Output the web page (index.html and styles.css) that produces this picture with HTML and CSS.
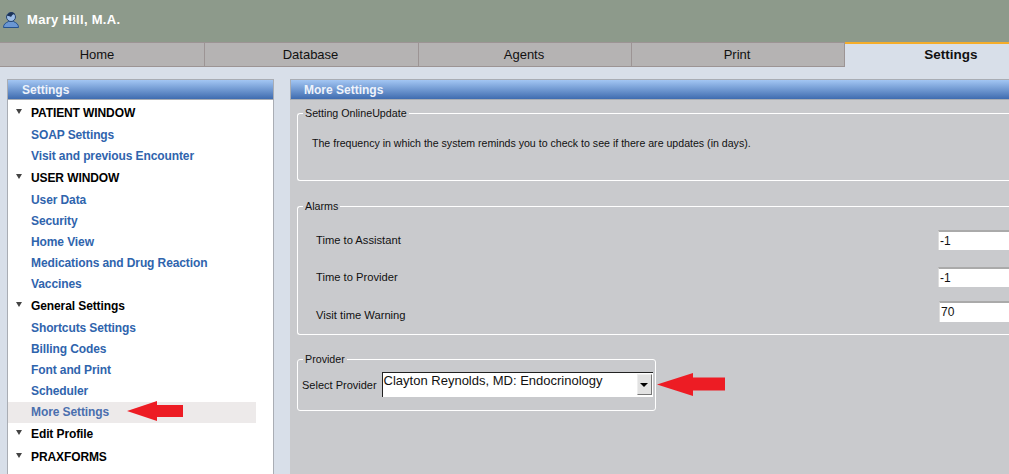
FILE: index.html
```html
<!DOCTYPE html>
<html lang="en">
<head>
    <meta charset="UTF-8">
    <title>Settings</title>
    <link rel="stylesheet" href="styles.css">
</head>
<body>
    <div class="topbar">
        <svg class="user-icon" width="16" height="17" viewBox="0 0 16 17">
            <path d="M.5 16.500c0-3.500 2-4.500 5-6h5c3 1.500 5 2.500 5 6z" fill="#6b97d2" stroke="#24528f"/>
            <circle cx="8" cy="6" r="4.500" fill="#9dbde6" stroke="#27456f"/>
            <path d="M4 5c1-4 6-5 8-2-2 0-3 1-4 3-1-1-2-1-4-1z" fill="#1c3358"/>
        </svg>
        <span class="user-name">Mary Hill, M.A.</span>
    </div>

    <div class="tabs">
        <div class="tab tab-home">Home</div>
        <div class="tab tab-db">Database</div>
        <div class="tab tab-agents">Agents</div>
        <div class="tab tab-print">Print</div>
        <div class="tab tab-active">Settings</div>
    </div>

    <div class="main">
        <div class="sidebar">
            <div class="panel-head">Settings</div>
            <div class="side-list">
                <div class="group"><span class="caret"></span>PATIENT WINDOW</div>
                <div class="item">SOAP Settings</div>
                <div class="item">Visit and previous Encounter</div>
                <div class="group"><span class="caret"></span>USER WINDOW</div>
                <div class="item">User Data</div>
                <div class="item">Security</div>
                <div class="item">Home View</div>
                <div class="item">Medications and Drug Reaction</div>
                <div class="item">Vaccines</div>
                <div class="group"><span class="caret"></span>General Settings</div>
                <div class="item">Shortcuts Settings</div>
                <div class="item">Billing Codes</div>
                <div class="item">Font and Print</div>
                <div class="item">Scheduler</div>
                <div class="item item-current">More Settings
                    <svg class="arrow-left" width="56" height="20" viewBox="0 0 56 20"><path d="M0 10 30 0v4h26v12H30v4z" fill="#ed1c24"/></svg>
                </div>
                <div class="group"><span class="caret"></span>Edit Profile</div>
                <div class="group"><span class="caret"></span>PRAXFORMS</div>
            </div>
        </div>

        <div class="content">
            <div class="panel-head">More Settings</div>
            <div class="content-body">
                <fieldset class="box box-update">
                    <legend>Setting OnlineUpdate</legend>
                    <p class="note">The frequency in which the system reminds you to check to see if there are updates (in days).</p>
                </fieldset>

                <fieldset class="box box-alarms">
                    <legend>Alarms</legend>
                    <div class="alarm-row">
                        <span>Time to Assistant</span>
                        <input class="num" type="text" value="-1">
                    </div>
                    <div class="alarm-row">
                        <span>Time to Provider</span>
                        <input class="num" type="text" value="-1">
                    </div>
                    <div class="alarm-row">
                        <span>Visit time Warning</span>
                        <input class="num num-plain" type="text" value="70">
                    </div>
                </fieldset>

                <div class="provider-wrap">
                    <fieldset class="box box-provider">
                        <legend>Provider</legend>
                        <div class="provider-row">
                            <span>Select Provider</span>
                            <div class="combo">
                                <span class="combo-text">Clayton Reynolds, MD: Endocrinology</span>
                                <span class="combo-btn"><span class="combo-caret"></span></span>
                            </div>
                        </div>
                    </fieldset>
                    <svg class="arrow-right" width="68" height="23" viewBox="0 0 68 23"><path d="M0 11.500 36 0v4.500h32v13H36V23z" fill="#ed1c24"/></svg>
                </div>
            </div>
        </div>
    </div>
</body>
</html>
```

FILE: styles.css
```css
html, body {
    margin: 0;
    padding: 0;
    height: 474px;
    overflow: hidden;
}
body {
    font-family: "Liberation Sans", Arial, sans-serif;
    background-color: #d8dfe9;
    color: #000;
}

/* top bar */
.topbar {
    height: 42px;
    background-color: #8d9a8b;
    display: flex;
    align-items: center;
    padding-left: 3px;
}
.user-icon {
    margin-right: 8px;
    margin-top: -4px;
}
.user-name {
    color: #fff;
    font-size: 13px;
    font-weight: bold;
    letter-spacing: 0.3px;
    margin-top: -3px;
}

/* tabs */
.tabs {
    display: flex;
    height: 23px;
    background-color: #b5b3b3;
    border-top: 1px solid #9c9494;
    border-bottom: 1px solid #9c9494;
}
.tab {
    font-size: 13px;
    line-height: 24px;
    text-align: center;
    color: #111;
    border-right: 1px solid #9c9494;
    box-sizing: border-box;
}
.tab-home { width: 205px; padding-right: 10px; }
.tab-db { width: 214px; padding-right: 2px; }
.tab-agents { width: 213px; padding-right: 2px; }
.tab-print { width: 213px; padding-right: 2px; }
.tab-active {
    flex: 1;
    margin-top: -1px;
    margin-bottom: -1px;
    padding-left: 48px;
    border-top: 2px solid #f5ad2a;
    border-right: none;
    background-color: #d8dfe9;
    font-size: 13.500px;
    font-weight: bold;
    line-height: 22px;
}

/* main area */
.main {
    display: flex;
    padding: 12px 0 0 7px;
    height: 395px;
}
.sidebar {
    width: 265px;
    margin-right: 16px;
    border: 1px solid #a9adb4;
    border-bottom: none;
    background-color: #fff;
    flex-shrink: 0;
}
.panel-head {
    height: 19px;
    line-height: 20px;
    border-bottom: 1px solid #a9adb4;
    padding-left: 14px;
    color: #eef3fb;
    font-size: 12px;
    font-weight: bold;
    background: linear-gradient(#a3c6f3, #3f6cb0);
}

/* sidebar list */
.side-list {
    padding-top: 2px;
}
.group {
    position: relative;
    height: 22px;
    margin-bottom: 1px;
    line-height: 22px;
    padding-left: 23px;
    font-size: 12px;
    font-weight: bold;
    letter-spacing: -0.1px;
    color: #000;
}
.caret {
    position: absolute;
    left: 8px;
    top: 7px;
    width: 0;
    height: 0;
    border-left: 3.500px solid transparent;
    border-right: 3.500px solid transparent;
    border-top: 5px solid #444;
}
.item {
    position: relative;
    height: 21px;
    line-height: 21px;
    padding-left: 23px;
    font-size: 12px;
    font-weight: bold;
    letter-spacing: -0.1px;
    color: #2f64ad;
}
.item-current {
    background-color: #edeaea;
    width: 225px;
    color: #4a6fae;
}
.arrow-left {
    position: absolute;
    left: 119px;
    top: -1px;
}

/* content */
.content {
    flex: 1;
    min-width: 0;
    border-top: 1px solid #a9adb4;
    background-color: #c9cacd;
}
.content .panel-head {
    border-left: 1px solid #a9adb4;
    padding-left: 13px;
}
.content-body {
    padding: 6px 0 0 7px;
}
.box {
    margin: 0;
    padding: 0;
    border: 1px solid #fff;
    border-radius: 3px;
    box-sizing: border-box;
    min-width: 0;
    font-size: 11px;
    color: #111;
}
.box legend {
    margin-left: 5px;
    padding: 0 2px;
    font-size: 10.700px;
    line-height: 14px;
    color: #111;
}
.box-update,
.box-alarms {
    border-right: none;
    border-radius: 3px 0 0 3px;
}
.box-update {
    height: 75px;
    margin-bottom: 18px;
}
.note {
    margin: 16px 0 0 14px;
    font-size: 10.600px;
    line-height: 14px;
}
.box-alarms {
    height: 136px;
    margin-bottom: 17px;
}
.alarm-row {
    display: flex;
    align-items: center;
    justify-content: space-between;
    height: 37.500px;
    margin-left: 18px;
    font-size: 11.200px;
}
.alarm-row:first-of-type {
    margin-top: 8px;
}
.num {
    width: 71px;
    height: 20px;
    padding: 0 0 0 1px;
    box-sizing: border-box;
    border: none;
    border-top: 2px solid #aaa;
    border-left: 1px solid #ddd;
    background-color: #fff;
    font-family: "Liberation Sans", Arial, sans-serif;
    font-size: 12px;
    color: #111;
}
.num-plain {
    width: 70px;
    height: 21px;
    margin-bottom: 7px;
}

/* provider */
.provider-wrap {
    display: flex;
    align-items: flex-start;
}
.box-provider {
    width: 359px;
    height: 59px;
    flex-shrink: 0;
}
.provider-row {
    display: flex;
    align-items: center;
    margin: 6px 0 0 4px;
}
.combo {
    display: flex;
    margin-left: 5px;
    width: 271px;
    height: 25px;
    box-sizing: border-box;
    border-top: 1px solid #222;
    border-left: 1px solid #222;
    background-color: #fff;
}
.combo-text {
    flex: 1;
    font-size: 13px;
    line-height: 15px;
    padding-left: 1px;
}
.combo-btn {
    width: 15px;
    height: 21px;
    margin: 1px 1px 0 0;
    box-sizing: border-box;
    border: 1px solid #777;
    border-top-color: #eee;
    border-left-color: #eee;
    background-color: #e2e2e2;
    display: flex;
    align-items: center;
    justify-content: center;
}
.combo-caret {
    width: 0;
    height: 0;
    border-left: 4px solid transparent;
    border-right: 4px solid transparent;
    border-top: 4px solid #000;
}
.arrow-right {
    margin: 21px 0 0 1px;
}
```
